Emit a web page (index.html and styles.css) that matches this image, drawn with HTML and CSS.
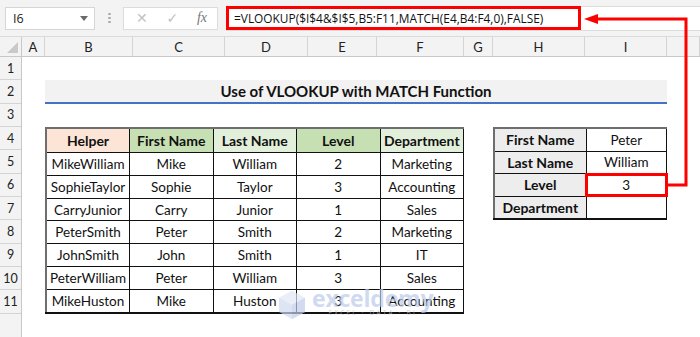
FILE: index.html
```html
<!DOCTYPE html>
<html lang="en">
<head>
  <meta charset="UTF-8">
  <title>VLOOKUP with MATCH</title>
  <link rel="stylesheet" href="styles.css">
</head>
<body>
  <!-- Name box + formula bar -->
  <div class="toolbar">
    <div class="namebox"><span>I6</span><span class="caret"></span></div>
    <div class="grip"></div>
    <div class="fxbox">
      <span class="btn cancel">&#x2715;</span>
      <span class="btn enter">&#x2713;</span>
      <span class="fx">fx</span>
    </div>
    <div class="formula">
      <span class="formula-text">=VLOOKUP($I$4&amp;$I$5,B5:F11,MATCH(E4,B4:F4,0),FALSE)</span>
    </div>
  </div>

  <div class="sheet">
    <div class="corner"><span class="corner-tri"></span></div>
    <div class="colheads">
      <div>A</div><div>B</div><div>C</div><div>D</div><div>E</div>
      <div>F</div><div>G</div><div>H</div><div>I</div><div></div>
    </div>
    <div class="rowheads">
      <div>1</div><div>2</div><div>3</div><div>4</div><div>5</div><div>6</div>
      <div>7</div><div>8</div><div>9</div><div>10</div><div>11</div>
    </div>

    <div class="cells">
      <div class="title">Use of VLOOKUP with MATCH Function</div>

      <table class="data">
        <tr>
          <th class="h-peach">Helper</th>
          <th class="h-green">First Name</th>
          <th class="h-light">Last Name</th>
          <th class="h-green">Level</th>
          <th class="h-light">Department</th>
        </tr>
        <tr><td>MikeWilliam</td><td>Mike</td><td>William</td><td>2</td><td>Marketing</td></tr>
        <tr><td>SophieTaylor</td><td>Sophie</td><td>Taylor</td><td>3</td><td>Accounting</td></tr>
        <tr><td>CarryJunior</td><td>Carry</td><td>Junior</td><td>1</td><td>Sales</td></tr>
        <tr><td>PeterSmith</td><td>Peter</td><td>Smith</td><td>2</td><td>Marketing</td></tr>
        <tr><td>JohnSmith</td><td>John</td><td>Smith</td><td>1</td><td>IT</td></tr>
        <tr><td>PeterWilliam</td><td>Peter</td><td>William</td><td>3</td><td>Sales</td></tr>
        <tr><td>MikeHuston</td><td>Mike</td><td>Huston</td><td>3</td><td>Accounting</td></tr>
      </table>

      <table class="lookup">
        <tr><th>First Name</th><td>Peter</td></tr>
        <tr><th>Last Name</th><td>William</td></tr>
        <tr><th>Level</th><td class="active">3</td></tr>
        <tr><th>Department</th><td></td></tr>
      </table>
    </div>
  </div>

  <!-- watermark -->
  <div class="watermark">
    <svg class="wm-logo" width="28" height="30" viewBox="0 0 28 30">
      <polygon points="14,1 27,8 27,22 14,29 1,22 1,8" fill="#cfd9ee"/>
      <polygon points="14,1 27,8 14,15 1,8" fill="#e0e7f5"/>
      <polygon points="14,15 27,8 27,22 14,29" fill="#bfcde9"/>
    </svg>
    <div class="wm-text">
      <span class="wm-name">exceldemy</span>
      <span class="wm-tag">EXCEL · DATA · BI</span>
    </div>
  </div>

  <!-- red connector from formula to the active cell -->
  <svg class="pointer" width="700" height="337" viewBox="0 0 700 337">
    <polyline points="668,185 686,185 686,19 596,19" fill="none" stroke="#f00" stroke-width="3"/>
    <polygon points="584,19 598,14 598,24" fill="#f00"/>
  </svg>
</body>
</html>
```

FILE: styles.css
```css
:root {
  --cols: 23px 88px 92px 83px 69px 87px 29px 92px 82px 1fr;
  --row: 23.33px;
}

* {
  box-sizing: border-box;
}

body {
  margin: 0;
  width: 700px;
  height: 337px;
  overflow: hidden;
  background: #fff;
  font-family: Lato, "Open Sans", sans-serif;
  color: #111;
  position: relative;
}

/* ---------- formula bar ---------- */
.toolbar {
  height: 37px;
  background: #f3f3f3;
  border-bottom: 1px solid #dadada;
  display: flex;
  align-items: center;
  padding-left: 5px;
}

.namebox {
  width: 90px;
  height: 23px;
  background: #fff;
  border: 1px solid #d6d6d6;
  display: flex;
  align-items: center;
  justify-content: space-between;
  padding: 0 6px 0 7px;
  font-family: "Open Sans", sans-serif;
  font-size: 12.5px;
  color: #222;
}

.caret {
  width: 0;
  height: 0;
  border-left: 4px solid transparent;
  border-right: 4px solid transparent;
  border-top: 5px solid #6a6a6a;
}

.grip {
  width: 28px;
  height: 12px;
  background: radial-gradient(circle, #a8a8a8 1px, transparent 1.4px) center / 3px 4px repeat-y;
}

.fxbox {
  width: 95px;
  height: 23px;
  background: #fff;
  border: 1px solid #dcdcdc;
  display: flex;
  align-items: center;
  justify-content: space-between;
  padding: 0 10px 0 12px;
  color: #c2c2c2;
}

.btn {
  font-family: "DejaVu Sans", sans-serif;
  font-size: 14px;
}

.fx {
  font-family: "Liberation Serif", serif;
  font-style: italic;
  font-size: 14px;
  color: #777;
}

.formula {
  flex: 1;
  height: 25px;
  margin-left: 8px;
  background: #fff;
  border: 1px solid #dcdcdc;
  border-right: none;
  display: flex;
  align-items: center;
}

.formula-text {
  width: 355px;
  height: 24px;
  margin-left: -1px;
  border: 3px solid #f00;
  display: flex;
  align-items: center;
  padding-left: 5px;
  font-family: "Open Sans", sans-serif;
  font-size: 11.9px;
  color: #111;
  white-space: nowrap;
}

/* ---------- grid ---------- */
.sheet {
  display: grid;
  grid-template-columns: 22px 1fr;
  grid-template-rows: 20px 1fr;
  height: 300px;
}

.corner {
  background: #f3f3f3;
  border-right: 1px solid #c8c8c8;
  border-bottom: 1px solid #c8c8c8;
  position: relative;
}

.corner-tri {
  position: absolute;
  right: 3px;
  bottom: 3px;
  border-left: 11px solid transparent;
  border-bottom: 11px solid #c9c9c9;
}

.colheads {
  display: grid;
  grid-template-columns: var(--cols);
  background: #f3f3f3;
  border-bottom: 1px solid #c8c8c8;
}

.colheads div {
  border-right: 1px solid #d4d4d4;
  display: flex;
  align-items: center;
  justify-content: center;
  font-size: 13px;
  color: #222;
}

.rowheads {
  background: #f3f3f3;
  border-right: 1px solid #c8c8c8;
}

.rowheads div {
  height: var(--row);
  border-bottom: 1px solid #d4d4d4;
  display: flex;
  align-items: center;
  justify-content: center;
  font-size: 12.5px;
  color: #222;
}

.cells {
  display: grid;
  grid-template-columns: var(--cols);
  grid-template-rows: repeat(11, var(--row));
  align-content: start;
}

.title {
  grid-column: 2 / 10;
  grid-row: 2;
  background: #f2f2f2;
  border-bottom: 2px solid #4472c4;
  display: flex;
  align-items: center;
  justify-content: center;
  font-weight: 700;
  font-size: 15px;
  padding-top: 1px;
}

/* ---------- tables ---------- */
table {
  border-collapse: collapse;
  width: 100%;
  height: 100%;
  table-layout: fixed;
  font-size: 13.5px;
}

th, td {
  border: 1px solid #111;
  text-align: center;
  padding: 0;
  white-space: nowrap;
}

th {
  font-weight: 700;
  font-size: 14px;
}

.data {
  grid-column: 2 / 7;
  grid-row: 4 / 12;
  border-left: 2px solid #6e6e6e;
  border-top: 2px solid #6e6e6e;
  border-bottom: 2px solid #111;
}

.h-peach { background: #fce4d6; }
.h-green { background: #c6e0b4; }
.h-light { background: #e2efda; }

.lookup {
  grid-column: 8 / 10;
  grid-row: 4 / 8;
  border-left: 2px solid #6e6e6e;
  border-top: 2px solid #6e6e6e;
  border-bottom: 2px solid #111;
}

.lookup th {
  background: #ededed;
  width: 92px;
}

.lookup td.active {
  outline: 3px solid #f00;
  outline-offset: -2px;
}

/* ---------- overlays ---------- */
.watermark {
  position: absolute;
  left: 278px;
  top: 290px;
  display: flex;
  align-items: flex-start;
  gap: 6px;
  opacity: 0.7;
  pointer-events: none;
}

.wm-text {
  display: flex;
  flex-direction: column;
  align-items: center;
  line-height: 1;
}

.wm-name {
  font-family: "Open Sans", sans-serif;
  font-weight: 700;
  font-size: 23px;
  color: #bccbea;
  margin-top: -3px;
  letter-spacing: -0.2px;
}

.wm-tag {
  font-family: "Open Sans", sans-serif;
  font-size: 6.5px;
  letter-spacing: 2.2px;
  color: #c4c4c4;
  margin-top: 0;
}

.pointer {
  position: absolute;
  left: 0;
  top: 0;
  pointer-events: none;
}
```
